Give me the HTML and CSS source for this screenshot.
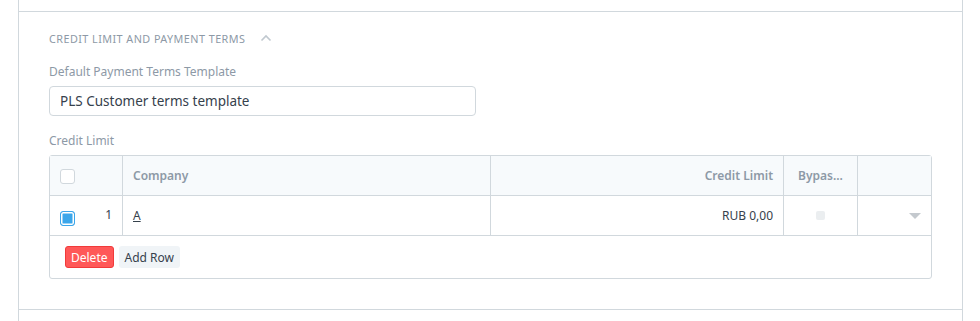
FILE: index.html
```html
<!DOCTYPE html>
<html lang="en">
<head>
  <meta charset="UTF-8">
  <title>Credit Limit and Payment Terms</title>
  <link rel="stylesheet" href="styles.css">
</head>
<body>
  <div class="form-layout">
    <div class="form-section">
      <div class="section-head">
        <span>Credit Limit and Payment Terms</span>
        <svg class="collapse-icon" width="12" height="8" viewBox="0 0 12 8">
          <path d="M1.5 6.5 L6 2 L10.5 6.5" fill="none" stroke="#c0c8cf" stroke-width="1.6"/>
        </svg>
      </div>

      <div class="field">
        <label class="control-label">Default Payment Terms Template</label>
        <div class="control-input">PLS Customer terms template</div>
      </div>

      <div class="field">
        <label class="control-label">Credit Limit</label>
        <div class="grid">
          <div class="grid-row grid-heading">
            <div class="col col-idx"><span class="check"></span></div>
            <div class="col col-company">Company</div>
            <div class="col col-limit text-right">Credit Limit</div>
            <div class="col col-bypass">Bypas...</div>
            <div class="col col-edit"></div>
          </div>
          <div class="grid-row">
            <div class="col col-idx"><span class="check checked"></span><span class="row-index">1</span></div>
            <div class="col col-company"><a class="link">A</a></div>
            <div class="col col-limit text-right value">RUB 0,00</div>
            <div class="col col-bypass"><span class="mini-check"></span></div>
            <div class="col col-edit">
              <svg width="12" height="6" viewBox="0 0 12 6"><path d="M0 0 L12 0 L6 6 Z" fill="#c4c9ce"/></svg>
            </div>
          </div>
          <div class="grid-footer">
            <button class="btn btn-danger">Delete</button>
            <button class="btn btn-default">Add Row</button>
          </div>
        </div>
      </div>
    </div>
    <div class="form-section next"></div>
  </div>
</body>
</html>
```

FILE: styles.css
```css
* { margin: 0; padding: 0; box-sizing: border-box; }

body {
  background: #fff;
  color: #36414c;
  font-family: "Noto Sans", "Open Sans", sans-serif;
}

.form-layout {
  margin-left: 18px;
  width: 945px;
  border-left: 1px solid #d1d8dd;
  border-right: 1px solid #d1d8dd;
  padding-top: 11px;
  height: 321px;
}

.form-section {
  border-top: 1px solid #d1d8dd;
  padding: 18px 30px 30px;
}

.form-section.next {
  padding: 0;
  height: 12px;
}

.section-head {
  display: flex;
  align-items: center;
  gap: 15px;
  font-size: 10.8px;
  letter-spacing: 0.45px;
  text-transform: uppercase;
  color: #8d99a6;
  height: 16px;
  margin-bottom: 18px;
}

.control-label {
  display: block;
  font-size: 12px;
  color: #8d99a6;
  line-height: 16px;
  margin-bottom: 6px;
}

.field + .field {
  margin-top: 17px;
}

.control-input {
  width: 427px;
  height: 30px;
  border: 1px solid #d1d8dd;
  border-radius: 4px;
  padding: 0 10px;
  font-size: 13.5px;
  line-height: 28px;
  color: #36414c;
}

.grid {
  width: 883px;
  border: 1px solid #d1d8dd;
  border-radius: 3px;
}

.grid-row {
  display: flex;
  height: 40px;
  border-bottom: 1px solid #d1d8dd;
  font-size: 12px;
}

.grid-heading {
  background: #f7fafc;
  font-weight: 600;
  color: #8d99a6;
}

.col {
  display: flex;
  align-items: center;
  padding: 0 10px;
  border-right: 1px solid #d1d8dd;
}

.col:last-child { border-right: none; }

.col-idx { width: 73px; justify-content: space-between; padding-right: 10px; }
.col-company { width: 368px; }
.col-limit { width: 293px; }
.col-bypass { width: 74px; }
.col-edit { flex: 1; justify-content: flex-end; padding-right: 10px; }

.text-right { justify-content: flex-end; }

.value { color: #36414c; }

.check {
  width: 15px;
  height: 15px;
  border: 1px solid #d1d8dd;
  border-radius: 3px;
  background: #fff;
  margin-top: 2px;
}

.check.checked {
  border: 1px solid #3ba6ea;
  box-shadow: inset 0 0 0 1.5px #fff;
  background: #3ba6ea;
  margin-top: 6px;
}

.row-index {
  color: #36414c;
  margin-top: -2px;
}

.col-bypass { justify-content: center; }

.mini-check {
  width: 9px;
  height: 9px;
  border-radius: 2px;
  background: #ebeef0;
}

.link {
  color: #36414c;
  text-decoration: underline;
}

.grid-footer {
  display: flex;
  gap: 5px;
  padding: 10px 15px;
  height: 42px;
}

.btn {
  font-family: inherit;
  font-size: 12px;
  height: 22px;
  padding: 0 5px;
  border-radius: 3px;
  border: 1px solid transparent;
  cursor: pointer;
}

.btn-danger {
  background: #ff5858;
  border-color: #f13a3a;
  color: #fff;
}

.btn-default {
  background: #f0f4f7;
  color: #36414c;
}
```
